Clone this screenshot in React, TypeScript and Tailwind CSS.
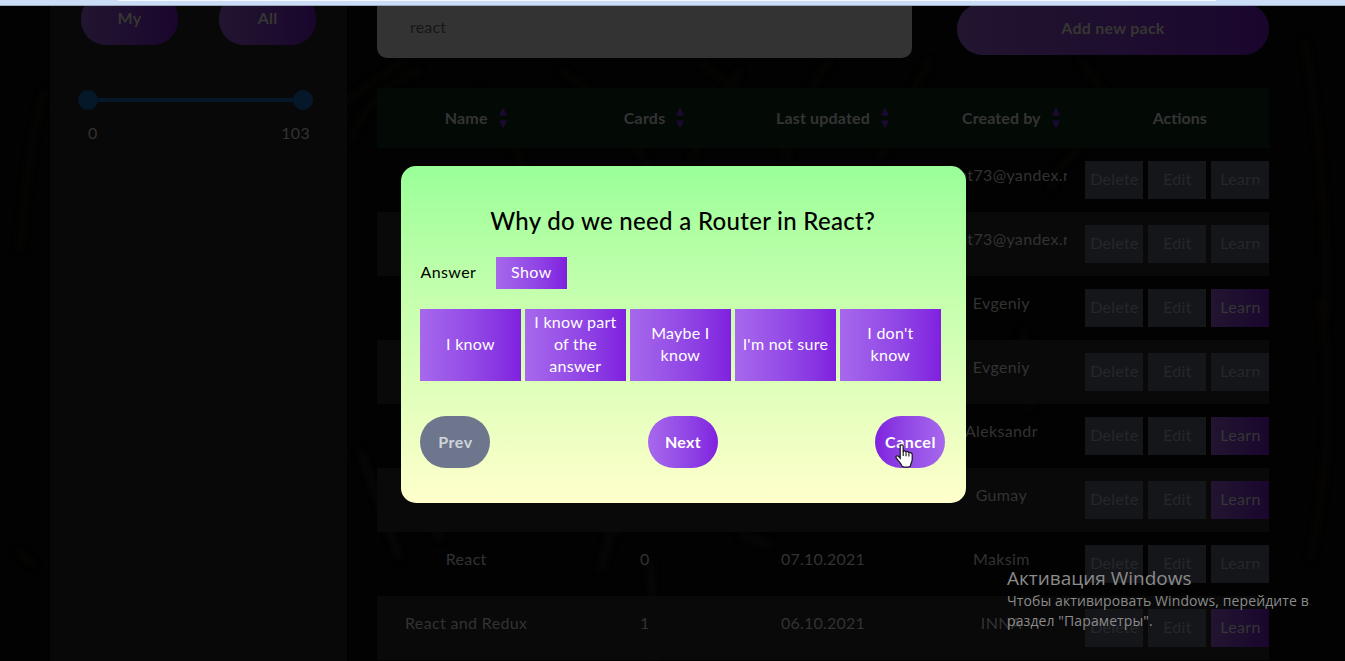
import React from 'react';

type Pack = { name: string; cards: string; updated: string; author: string; learn: boolean };

const packs: Pack[] = [
  { name: 'React', cards: '0', updated: '12.10.2021', author: 'nt73@yandex.ru', learn: false },
  { name: 'React', cards: '0', updated: '12.10.2021', author: 'nt73@yandex.ru', learn: false },
  { name: 'React', cards: '4', updated: '11.10.2021', author: 'Evgeniy', learn: true },
  { name: 'React', cards: '0', updated: '10.10.2021', author: 'Evgeniy', learn: false },
  { name: 'React', cards: '2', updated: '09.10.2021', author: 'Aleksandr', learn: true },
  { name: 'React', cards: '3', updated: '08.10.2021', author: 'Gumay', learn: true },
  { name: 'React', cards: '0', updated: '07.10.2021', author: 'Maksim', learn: false },
  { name: 'React and Redux', cards: '1', updated: '06.10.2021', author: 'INNA', learn: true },
];

const columns = [
  { title: 'Name', track: 'tracking-[0.2px]' },
  { title: 'Cards', track: 'tracking-[0.2px]' },
  { title: 'Last updated', track: 'tracking-[0.17px]' },
  { title: 'Created by', track: 'tracking-[0.1px]' },
];

const grades = ['I know', 'I know part of the answer', 'Maybe I know', "I'm not sure", "I don't know"];

function Foliage() {
  return (
    <svg className="absolute inset-0 -z-10 blur-[3px]" width="1345" height="661" viewBox="0 0 1345 661" fill="none">
      <g stroke="#0b0904" strokeWidth="5" opacity="0.6">
        <path d="M340 105L405 60M350 140Q375 85 420 70M560 70Q620 110 650 170M700 60Q760 110 790 160M480 90Q510 130 525 170M740 70L690 160M830 60Q800 100 790 150" />
        <path d="M60 470Q170 500 330 600M80 480Q190 570 340 590M180 60Q250 130 330 150M220 100Q260 160 310 220M930 60Q900 110 880 160M1050 190Q1060 160 1080 150" />
        <path d="M1305 40Q1330 200 1325 320M1320 300Q1340 420 1310 560M20 250Q30 130 45 90M15 550L35 565M1080 60L1110 100M1020 330Q1040 360 1030 410" />
      </g>
      <g stroke="#0c0c0b" strokeWidth="6" opacity="0.6">
        <path d="M280 480Q300 570 325 598M268 530L290 600M360 450L400 560M425 500L440 540M605 540L625 520M650 560L655 660M740 535L770 545M610 540L600 570" />
      </g>
    </svg>
  );
}

function Sorter() {
  return (
    <svg className="absolute left-full top-1/2 ml-[11px] -translate-y-1/2" width="8" height="22" viewBox="0 0 8 22">
      <path d="M4 0.5L8 8.5H0ZM0 13.5H8L4 21.5Z" fill="#1c0932" />
    </svg>
  );
}

function RowButton({ label, active }: { label: string; active?: boolean }) {
  return (
    <div
      className={
        active
          ? 'flex h-[38px] w-[58px] shrink-0 items-center justify-center bg-linear-to-r from-[#221530] to-[#1a062d] pb-[2px] pl-px text-[#363636]'
          : 'flex h-[38px] w-[58px] shrink-0 items-center justify-center bg-[#15161a] pb-[2px] pl-px text-[#25272a]'
      }
    >
      <span className="tracking-[0.3px]">{label}</span>
    </div>
  );
}

function Sidebar() {
  return (
    <aside className="w-[297px] shrink-0 bg-[#090909]/90">
      <div className="flex justify-between px-[31px]">
        {['My', 'All'].map((t) => (
          <div
            key={t}
            className="-mt-[13px] flex h-[52px] w-[97px] items-center justify-center rounded-[25px] bg-linear-to-r from-[#221530] to-[#1a062d] pb-[2px] font-bold tracking-[0.2px] text-[#363632]"
          >
            {t}
          </div>
        ))}
      </div>
      <div className="mt-[45px] flex h-5 items-center px-7">
        <div className="size-5 rounded-full bg-[#05182a]" />
        <div className="h-1 flex-1 bg-[#05182a]" />
        <div className="mr-[6px] size-5 rounded-full bg-[#05182a]" />
      </div>
      <div className="mt-[11px] flex justify-between pl-[38px] pr-[37px] leading-6 tracking-[0.3px] text-[#333]">
        <span>0</span>
        <span>103</span>
      </div>
    </aside>
  );
}

function PackTable() {
  return (
    <div className="mt-[30px] w-[892px]">
      <div className="grid h-[60px] grid-cols-5 items-center bg-[#030b07]/90 font-bold text-[#343434]">
        {columns.map((c) => (
          <div key={c.title} className="flex justify-center">
            <span className={`relative ${c.track}`}>
              {c.title}
              <Sorter />
            </span>
          </div>
        ))}
        <div className="text-center">Actions</div>
      </div>
      {packs.map((p, i) => (
        <div
          key={i}
          className={i % 2 ? 'grid h-16 grid-cols-5 bg-[#0a0a0a]/90 text-[#333]' : 'grid h-16 grid-cols-5 text-[#333]'}
        >
          <div className="pt-[15px] text-center tracking-[0.35px]">{p.name}</div>
          <div className="pt-[15px] text-center">{p.cards}</div>
          <div className="pt-[15px] text-center tracking-[0.2px]">{p.updated}</div>
          <div className="px-6 pt-[15px]">
            <div
              className={
                p.author.includes('@')
                  ? 'overflow-hidden whitespace-nowrap pl-[22px] tracking-[0.35px]'
                  : 'text-center tracking-[0.35px]'
              }
            >
              {p.author}
            </div>
          </div>
          <div className="flex items-center justify-end gap-[5px]">
            <RowButton label="Delete" />
            <RowButton label="Edit" />
            <RowButton label="Learn" active={p.learn} />
          </div>
        </div>
      ))}
    </div>
  );
}

function HandCursor() {
  return (
    <svg className="absolute left-[20px] top-[28px]" width="19" height="24" viewBox="0 0 19 24">
      <path
        d="M5.2 2.3C5.2 0.3 8.2 0.3 8.2 2.3V8C8.5 6.4 11 6.7 11 8.4C11.4 7 13.9 7.4 13.9 9.2C14.4 8 17.2 8.5 17.2 10.6V15.5C17.2 18.2 15.4 19.5 15.3 22.2C12.5 23.4 9.4 23.4 7 22.2C6.7 19.8 3.5 17.5 1 13.7C0.3 12.2 2.2 11.2 3.5 12.4L5.2 14.2Z"
        fill="#fff"
        stroke="#161616"
        strokeWidth="1.2"
      />
      <path d="M8.2 7.5V12M11 8.5V12.3M13.9 9.5V12.6" stroke="#161616" strokeWidth="1.1" />
    </svg>
  );
}

function QuestionModal() {
  return (
    <div className="absolute inset-0 flex justify-center pl-[21px] pt-[166px]">
      <div className="flex h-[337px] w-[565px] flex-col rounded-[15px] bg-linear-to-b from-[#99ff99] to-[#ffffcc] pl-[19.4px] pr-[20px]">
        <h2 className="mt-[37px] text-center text-[24px] font-medium leading-9 tracking-[0.3px] text-black">
          Why do we need a Router in React?
        </h2>
        <div className="mt-[18px] flex h-8 items-center">
          <span className="w-[76px] pb-[2px] pl-[0.6px] tracking-[0.4px] text-black">Answer</span>
          <button className="h-8 w-[71px] bg-linear-to-r from-[#a768ec] to-[#801fdf] pb-[2px] tracking-[0.5px] text-white">
            Show
          </button>
        </div>
        <div className="mt-5 flex">
          {grades.map((g) => (
            <button
              key={g}
              className="mr-1 h-[72px] w-[101px] bg-linear-to-r from-[#a768ec] to-[#801fdf] px-[6px] pb-[2px] leading-[22px] tracking-[0.25px] text-white"
            >
              {g}
            </button>
          ))}
        </div>
        <div className="mt-[35px] flex justify-between pl-[0.6px] font-bold">
          <button className="h-[52px] w-[70px] rounded-[26px] bg-[#6d768c] tracking-[0.5px] text-[#d0d3da]">Prev</button>
          <button className="h-[52px] w-[70px] rounded-[26px] bg-linear-to-r from-[#a768ec] to-[#801fdf] tracking-[0.3px] text-white">
            Next
          </button>
          <button className="relative h-[52px] w-[70px] rounded-[26px] bg-linear-to-l from-[#a768ec] to-[#801fdf] tracking-[0.5px] text-white">
            Cancel
            <HandCursor />
          </button>
        </div>
      </div>
    </div>
  );
}

export default function App() {
  return (
    <div className="relative isolate h-[661px] w-[1345px] overflow-hidden bg-[#020202] font-['Lato','Noto_Sans',sans-serif] text-[16px] leading-6">
      <Foliage />
      <div className="relative z-10 flex h-[6px] flex-col border-b border-[#9eabbe] bg-[#cbdcf7]">
        <div className="ml-[118px] h-px w-[1098px] bg-[#f4f8fe]" />
      </div>
      <div className="mx-[50px] flex h-[655px]">
        <Sidebar />
        <main className="pl-[30px]">
          <div className="flex w-[892px] items-start justify-between">
            <div className="h-[52px] w-[535px] rounded-b-[10px] bg-[#333] pl-[33px] pt-[9px] tracking-[0.2px] text-[#171717]">
              react
            </div>
            <div className="-mt-[3px] flex h-[52px] w-[312px] items-center justify-center rounded-[26px] bg-linear-to-r from-[#221530] to-[#1a062d] pb-[3px] font-bold tracking-[0.25px] text-[#363632]">
              Add new pack
            </div>
          </div>
          <PackTable />
        </main>
      </div>
      <QuestionModal />
      <div className="absolute left-[1007px] top-[566px] w-[320px] font-['Open_Sans','Noto_Sans',sans-serif] text-[#8b8b8b]">
        <div className="text-[19px] leading-6">Активация Windows</div>
        <div className="whitespace-nowrap pt-px text-[14px] leading-5 tracking-[0.1px]">
          Чтобы активировать Windows, перейдите в<br />
          раздел "Параметры".
        </div>
      </div>
    </div>
  );
}
